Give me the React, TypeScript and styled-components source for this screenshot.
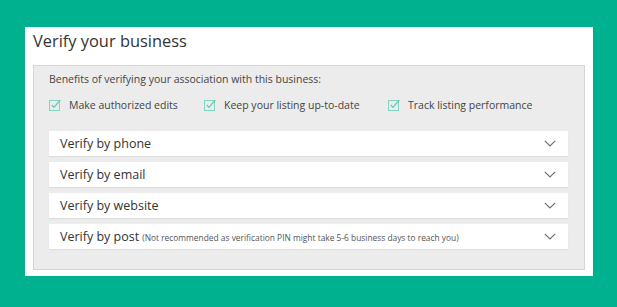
import React from 'react'
import styled, { createGlobalStyle } from 'styled-components'

const GlobalStyle = createGlobalStyle`
  html, body {
    margin: 0;
    padding: 0;
    background: #00b18f;
  }
  body {
    font-family: 'Open Sans', 'Noto Sans', sans-serif;
    width: 617px;
    height: 307px;
    overflow: hidden;
  }
`

const Frame = styled.div`
  padding: 27px 24px 31px 25px;
`

const Card = styled.div`
  background: #ffffff;
  height: 249px;
  box-sizing: border-box;
  padding: 2px 8px 0 8px;
`

const Title = styled.h1`
  margin: 0;
  height: 36px;
  font-size: 16.4px;
  font-weight: 400;
  color: #333333;
  line-height: 24px;
`

const Panel = styled.div`
  background: #ececec;
  border: 1px solid #d6d6d6;
  height: 205px;
  box-sizing: border-box;
  padding: 5px 16px 0 15px;
`

const Intro = styled.p`
  margin: 0;
  font-size: 10.5px;
  line-height: 16px;
  color: #444444;
`

const Benefits = styled.div`
  display: flex;
  margin: 10px 0 18px 0;
  height: 16px;
  align-items: center;
`

const Benefit = styled.div<{ $width: number }>`
  display: flex;
  align-items: center;
  gap: 8px;
  width: ${p => p.$width}px;
  font-size: 10.5px;
  color: #444444;
`

const Options = styled.div`
  display: flex;
  flex-direction: column;
  gap: 6px;
`

const Option = styled.div`
  background: #ffffff;
  height: 25px;
  display: flex;
  align-items: center;
  padding: 0 12px 0 11px;
  box-shadow: 0 1px 1px rgba(0, 0, 0, 0.06);
`

const OptionLabel = styled.span`
  font-size: 12.5px;
  color: #333333;
  flex: 1;
  white-space: nowrap;
`

const Note = styled.span`
  font-size: 8.4px;
  color: #555555;
  margin-left: 3px;
`

const CheckIcon = () => (
  <svg width="12" height="12" viewBox="0 0 12 12">
    <rect x="0.5" y="1.5" width="10" height="10" fill="none" stroke="#7fd6c4" strokeWidth="1" />
    <path d="M2.8 6 L5 8.4 L11.2 1.2" fill="none" stroke="#5cc9b2" strokeWidth="1.2" />
  </svg>
)

const Chevron = () => (
  <svg width="12" height="7" viewBox="0 0 12 7">
    <path d="M0.8 0.8 L6 6 L11.2 0.8" fill="none" stroke="#707070" strokeWidth="1.2" />
  </svg>
)

const benefits = [
  { label: 'Make authorized edits', width: 155 },
  { label: 'Keep your listing up-to-date', width: 184 },
  { label: 'Track listing performance', width: 160 }
]

const options = [
  { label: 'Verify by phone' },
  { label: 'Verify by email' },
  { label: 'Verify by website' },
  {
    label: 'Verify by post',
    note: '(Not recommended as verification PIN might take 5-6 business days to reach you)'
  }
]

const App: React.FC = () => {
  return (
    <Frame>
      <GlobalStyle />
      <Card>
        <Title>Verify your business</Title>
        <Panel>
          <Intro>Benefits of verifying your association with this business:</Intro>
          <Benefits>
            {benefits.map(b => (
              <Benefit key={b.label} $width={b.width}>
                <CheckIcon />
                <span>{b.label}</span>
              </Benefit>
            ))}
          </Benefits>
          <Options>
            {options.map(o => (
              <Option key={o.label}>
                <OptionLabel>
                  {o.label}
                  {o.note && <Note>{o.note}</Note>}
                </OptionLabel>
                <Chevron />
              </Option>
            ))}
          </Options>
        </Panel>
      </Card>
    </Frame>
  )
}

export default App
